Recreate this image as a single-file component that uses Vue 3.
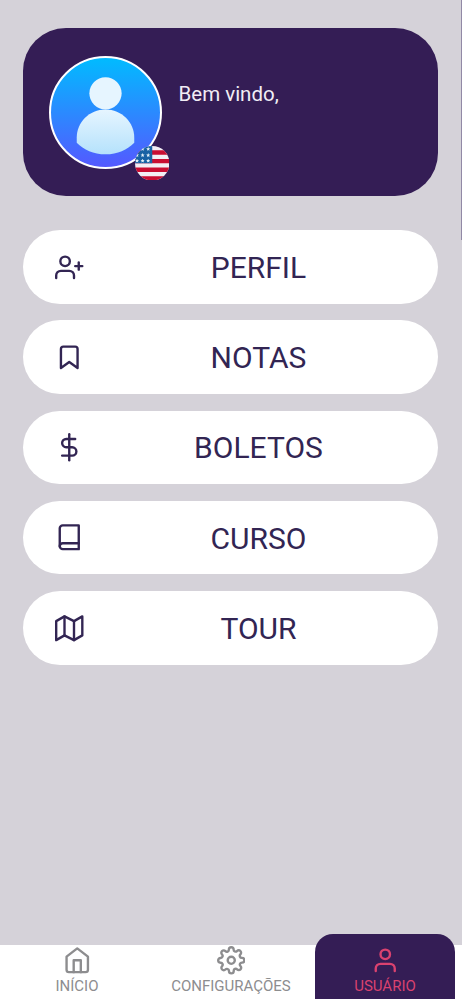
<script setup>
import { ref } from "vue";

const activeTab = ref('user');
const menuItems = ref([
    { name: 'perfil', text: 'PERFIL', paths: ['M16 21v-2a4 4 0 0 0-4-4H5a4 4 0 0 0-4 4v2', 'M8.5 3a4 4 0 1 0 0 8a4 4 0 1 0 0-8z', 'M20 8v6', 'M23 11h-6'] },
    { name: 'notas', text: 'NOTAS', paths: ['M19 21l-7-5-7 5V5a2 2 0 0 1 2-2h10a2 2 0 0 1 2 2z'] },
    { name: 'boletos', text: 'BOLETOS', paths: ['M12 1v22', 'M17 5H9.5a3.5 3.5 0 0 0 0 7h5a3.5 3.5 0 0 1 0 7H6'] },
    { name: 'curso', text: 'CURSO', paths: ['M4 19.5A2.5 2.5 0 0 1 6.5 17H20', 'M6.5 2H20v20H6.5A2.5 2.5 0 0 1 4 19.5v-15A2.5 2.5 0 0 1 6.5 2z'] },
    { name: 'tour', text: 'TOUR', paths: ['M1 6v16l7-4 8 4 7-4V2l-7 4-8-4-7 4z', 'M8 2v16', 'M16 6v16'] },
])
const tabs = ref([
    { name: 'home', text: 'INÍCIO', paths: ['M3 9l9-7 9 7v11a2 2 0 0 1-2 2H5a2 2 0 0 1-2-2z', 'M9 22V12h6v10'] },
    {
        name: 'settings', text: 'CONFIGURAÇÕES', paths: [
            'M12 9a3 3 0 1 0 0 6a3 3 0 1 0 0-6z',
            'M19.4 15a1.65 1.65 0 0 0 .33 1.82l.06.06a2 2 0 0 1 0 2.83 2 2 0 0 1-2.83 0l-.06-.06a1.65 1.65 0 0 0-1.82-.33 1.65 1.65 0 0 0-1 1.51V21a2 2 0 0 1-2 2 2 2 0 0 1-2-2v-.09A1.65 1.65 0 0 0 9 19.4a1.65 1.65 0 0 0-1.82.33l-.06.06a2 2 0 0 1-2.83 0 2 2 0 0 1 0-2.83l.06-.06a1.65 1.65 0 0 0 .33-1.82 1.65 1.65 0 0 0-1.51-1H3a2 2 0 0 1-2-2 2 2 0 0 1 2-2h.09A1.65 1.65 0 0 0 4.6 9a1.65 1.65 0 0 0-.33-1.82l-.06-.06a2 2 0 0 1 0-2.83 2 2 0 0 1 2.83 0l.06.06a1.65 1.65 0 0 0 1.82.33H9a1.65 1.65 0 0 0 1-1.51V3a2 2 0 0 1 2-2 2 2 0 0 1 2 2v.09a1.65 1.65 0 0 0 1 1.51 1.65 1.65 0 0 0 1.82-.33l.06-.06a2 2 0 0 1 2.83 0 2 2 0 0 1 0 2.83l-.06.06a1.65 1.65 0 0 0-.33 1.82V9a1.65 1.65 0 0 0 1.51 1H21a2 2 0 0 1 2 2 2 2 0 0 1-2 2h-.09a1.65 1.65 0 0 0-1.51 1z',
        ]
    },
    { name: 'user', text: 'USUÁRIO', paths: ['M20 21v-2a4 4 0 0 0-4-4H8a4 4 0 0 0-4 4v2', 'M12 3a4 4 0 1 0 0 8a4 4 0 1 0 0-8z'] },
])
const stars = [[7.5, 3], [13, 3], [2, 9], [7.5, 9], [13, 9], [2, 14.5], [7.5, 14.5], [13, 14.5]];

function onTabClick(name) {
    activeTab.value = name;
}
</script>

<template>
    <div class="screen">
        <main class="content">
            <header class="welcome-card">
                <div class="avatar-wrapper">
                    <svg class="avatar" viewBox="0 0 112 112">
                        <defs>
                            <linearGradient id="avatarBg" x1="0" y1="0" x2="0" y2="1">
                                <stop offset="0" stop-color="#00bcff" />
                                <stop offset="1" stop-color="#5558ff" />
                            </linearGradient>
                            <linearGradient id="avatarBody" x1="0" y1="0" x2="0" y2="1">
                                <stop offset="0" stop-color="#e6f5ff" />
                                <stop offset="1" stop-color="#b5e2fc" />
                            </linearGradient>
                        </defs>
                        <circle cx="56" cy="56" r="55" fill="url(#avatarBg)" stroke="#ffffff" stroke-width="2" />
                        <circle cx="56" cy="37" r="16" fill="#e6f5ff" />
                        <path d="M56 53c-16 0-28.5 12.5-28.5 28v5C34.5 93 44 97.5 56 97.5s21.5-4.5 28.5-11.5V81C84.5 65.5 72 53 56 53z"
                            fill="url(#avatarBody)" />
                    </svg>
                    <svg class="flag" viewBox="0 0 34 34">
                        <clipPath id="flagClip">
                            <circle cx="17" cy="17" r="17" />
                        </clipPath>
                        <g clip-path="url(#flagClip)">
                            <rect width="34" height="34" fill="#f3eef4" />
                            <path d="M0 4.25h34v4.25H0zM0 12.75h34v4.25H0zM0 21.25h34v4.25H0zM0 29.75h34v4.25H0z"
                                fill="#c90d32" />
                            <rect width="17" height="17" fill="#1762a4" />
                            <path v-for="(star, i) in stars" :key="i" :transform="`translate(${star[0]} ${star[1]})`"
                                d="M0-2l.6 1.3H2L.9.3l.4 1.5L0 1l-1.3.8.4-1.5L-2-.7h1.4z" fill="#e4f1f8" />
                        </g>
                    </svg>
                </div>
                <span class="welcome-text">Bem vindo,</span>
            </header>

            <nav class="menu">
                <button v-for="item in menuItems" :key="item.name" class="menu-item">
                    <svg class="icon" viewBox="0 0 24 24">
                        <path v-for="path in item.paths" :key="path" :d="path" />
                    </svg>
                    <span class="menu-item-text">{{ item.text }}</span>
                </button>
            </nav>
        </main>

        <nav class="tab-bar">
            <button v-for="tab in tabs" :key="tab.name" class="tab" :class="{ 'tab-active': tab.name === activeTab }"
                @click="onTabClick(tab.name)">
                <svg class="icon" viewBox="0 0 24 24">
                    <path v-for="path in tab.paths" :key="path" :d="path" />
                </svg>
                <span class="tab-text">{{ tab.text }}</span>
            </button>
        </nav>
        <div class="scroll-thumb"></div>
    </div>
</template>

<style>
body {
    margin: 0;
}
</style>

<style scoped>
.screen {
    position: relative;
    display: flex;
    flex-direction: column;
    height: 100vh;
    overflow: hidden;
    background: #d5d2d9;
    font-family: Roboto, sans-serif;
}

button {
    border: none;
    font-family: inherit;
    cursor: pointer;
}

.content {
    flex: 1;
    padding: 28px 23.6px 0 23px;
}

.welcome-card {
    display: flex;
    align-items: flex-start;
    box-sizing: border-box;
    height: 168px;
    padding: 28px 26px;
    border-radius: 43px;
    background: #341d55;
}

.avatar-wrapper {
    position: relative;
    width: 113px;
    height: 113px;
}

.avatar {
    display: block;
    width: 113px;
    height: 113px;
}

.flag {
    position: absolute;
    right: -7px;
    bottom: -11px;
    width: 34.5px;
    height: 34.5px;
}

.welcome-text {
    margin: 26px 0 0 16.5px;
    font-size: 20.5px;
    line-height: 24px;
    color: #f1edf5;
}

.menu {
    display: flex;
    flex-direction: column;
    gap: 16.8px;
    margin-top: 34px;
}

.menu-item {
    display: flex;
    align-items: center;
    height: 73.5px;
    padding: 0 32px;
    border-radius: 37px;
    background: #ffffff;
    color: #322553;
}

.icon {
    display: block;
    flex: none;
    width: 28.5px;
    height: 28.5px;
    fill: none;
    stroke: currentColor;
    stroke-width: 2;
    stroke-linecap: round;
    stroke-linejoin: round;
}

.menu-item-text {
    flex: 1;
    margin-left: 27px;
    padding-top: 2px;
    font-size: 30px;
    line-height: 36px;
    text-align: center;
}

.tab-bar {
    display: flex;
    align-items: flex-end;
    height: 55.5px;
    background: #ffffff;
}

.tab {
    display: flex;
    flex-direction: column;
    align-items: center;
    box-sizing: border-box;
    width: 140px;
    height: 65px;
    margin: 0 7px 1px;
    padding: 12px 0 0;
    border-radius: 18px 18px 0 0;
    background: transparent;
    color: #8d8d8f;
}

.tab-active {
    background: #341d55;
    color: #da426f;
}

.tab-text {
    margin-top: 2px;
    font-size: 15px;
    line-height: 18px;
}

/* thin scroll indicator on the right edge */
.scroll-thumb {
    position: absolute;
    top: 0;
    right: 0;
    width: 1px;
    height: 240px;
    background: #9189a6;
}
</style>
